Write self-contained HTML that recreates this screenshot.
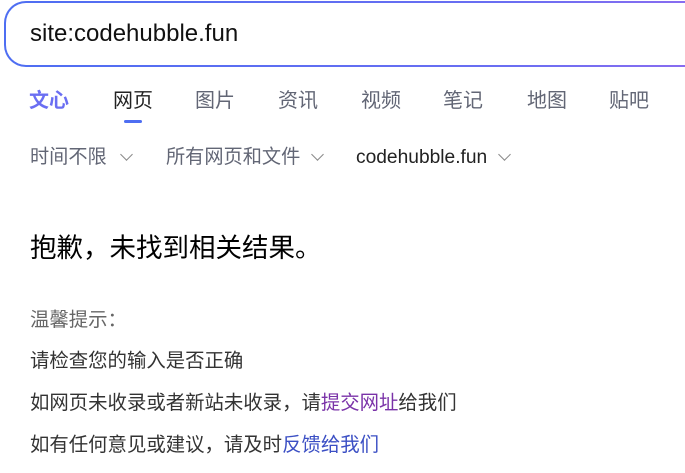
<!DOCTYPE html>
<html><head><meta charset="utf-8"><style>
body{margin:0;width:685px;height:473px;overflow:hidden;background:#fff;font-family:"Liberation Sans","Noto Sans CJK SC",sans-serif;position:relative}
.box{position:absolute;left:4px;top:1px;width:720px;height:66px;border-radius:22px;border:2px solid transparent;background:linear-gradient(#fff,#fff) padding-box,linear-gradient(90deg,#4e6ef2,#6a6ef2 70%,#8e6cf0) border-box;box-sizing:border-box}
.q{position:absolute;left:30px;top:20px;font-size:24px;color:#111;line-height:28px}
.t{position:absolute;top:88px;font-size:20px;color:#626675;line-height:26px}
.f{position:absolute;top:146px;font-size:19.2px;color:#626675;line-height:24px}
.chev{position:absolute;top:150px;width:8px;height:8px;border-right:1.5px solid #888;border-bottom:1.5px solid #888;transform:rotate(45deg)}
.p{position:absolute;left:30px;font-size:19.4px;color:#333;line-height:24px}
</style></head><body>
<div class="box"></div>
<div class="q">site:codehubble.fun</div>
<div class="t" style="left:29px;color:#6a6ef2;font-weight:bold">文心</div>
<div class="t" style="left:113px;color:#222">网页</div>
<div style="position:absolute;left:124px;top:120px;width:18px;height:3px;background:#4e6ef2;border-radius:2px"></div>
<div class="t" style="left:195px">图片</div>
<div class="t" style="left:278px">资讯</div>
<div class="t" style="left:361px">视频</div>
<div class="t" style="left:443px">笔记</div>
<div class="t" style="left:527px">地图</div>
<div class="t" style="left:609px">贴吧</div>
<div class="f" style="left:30px">时间不限</div><div class="chev" style="left:122px"></div>
<div class="f" style="left:166px">所有网页和文件</div><div class="chev" style="left:313px"></div>
<div class="f" style="left:356px;color:#222">codehubble.fun</div><div class="chev" style="left:500px"></div>
<div style="position:absolute;left:30px;top:233px;font-size:26.5px;color:#000;line-height:30px">抱歉，未找到相关结果。</div>
<div class="p" style="top:308px;color:#666">温馨提示：</div>
<div class="p" style="top:349px">请检查您的输入是否正确</div>
<div class="p" style="top:391px">如网页未收录或者新站未收录，请<span style="color:#7a32a8">提交网址</span>给我们</div>
<div class="p" style="top:433px">如有任何意见或建议，请及时<span style="color:#3b4fc4">反馈给我们</span></div>
</body></html>
